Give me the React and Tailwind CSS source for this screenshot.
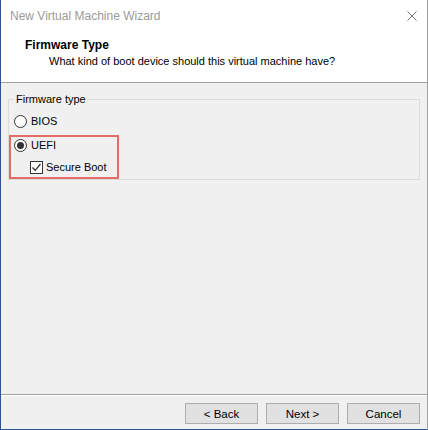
import React from 'react'

function Radio({ checked }) {
  return (
    <svg width="13" height="13" viewBox="0 0 13 13" className="shrink-0">
      <circle cx="6.5" cy="6.5" r="6" fill="#fff" stroke="#333" strokeWidth="1" />
      {checked && <circle cx="6.5" cy="6.5" r="3.5" fill="#333" />}
    </svg>
  )
}

function Check() {
  return (
    <svg width="13" height="13" viewBox="0 0 13 13" className="shrink-0">
      <rect x="0.5" y="0.5" width="12" height="12" fill="#fff" stroke="#333" strokeWidth="1" />
      <path d="M2.5 6.5 L5.2 9.3 L10.5 3" fill="none" stroke="#333" strokeWidth="1.3" />
    </svg>
  )
}

function Btn({ children }) {
  return (
    <button className="w-[73px] h-[21px] bg-[#e1e1e1] border border-[#adadad] text-[11.5px] leading-[16px] text-black flex items-center justify-center">
      {children}
    </button>
  )
}

export default function App() {
  return (
    <div className="w-[428px] h-[430px] flex flex-col bg-[#f0f0f0] border-l border-l-[#2b579a] border-b border-b-[#2b579a] border-r border-r-[#a0a0a0] font-['Liberation_Sans',Arial,sans-serif] text-[11px] leading-[16px] text-black overflow-hidden">
      {/* Title bar */}
      <div className="h-[31px] bg-white flex items-center justify-between pl-[9px] pr-[10px]">
        <span className="text-[12px] text-[#9a9a9a]">New Virtual Machine Wizard</span>
        <svg width="10" height="10" viewBox="0 0 10 10">
          <path d="M0.5 0.5 L9.5 9.5 M9.5 0.5 L0.5 9.5" stroke="#777" strokeWidth="1" />
        </svg>
      </div>

      {/* Header */}
      <div className="h-[52px] bg-white border-b border-b-[#a0a0a0] pt-[6px]">
        <div className="pl-[24px] text-[12px] font-bold">Firmware Type</div>
        <div className="pl-[48px]">What kind of boot device should this virtual machine have?</div>
      </div>

      {/* Body */}
      <div className="flex-1 px-[7px] pt-[16px]">
        <div className="relative h-[81px] border border-[#dcdcdc] pl-[5px] pt-[13px]">
          <span className="absolute -top-[9px] left-[5px] px-[2px] bg-[#f0f0f0]">Firmware type</span>
          <div className="flex items-center gap-[4px] h-[16px]">
            <Radio />
            <span>BIOS</span>
          </div>
          <div className="flex items-center gap-[4px] h-[16px] mt-[8px]">
            <Radio checked />
            <span>UEFI</span>
          </div>
          <div className="flex items-center gap-[3px] h-[16px] mt-[6px] ml-[16px]">
            <Check />
            <span>Secure Boot</span>
          </div>
          <div className="absolute left-0 top-[35px] w-[110px] h-[44px] border-2 border-[#e56b6b]" />
        </div>
      </div>

      {/* Footer */}
      <div className="h-[35px] border-t border-t-[#a0a0a0]">
        <div className="h-full border-t border-t-white flex justify-end gap-[8px] pt-[7px] pr-[7px]">
          <Btn>&lt; Back</Btn>
          <Btn>Next &gt;</Btn>
          <Btn>Cancel</Btn>
        </div>
      </div>
    </div>
  )
}
